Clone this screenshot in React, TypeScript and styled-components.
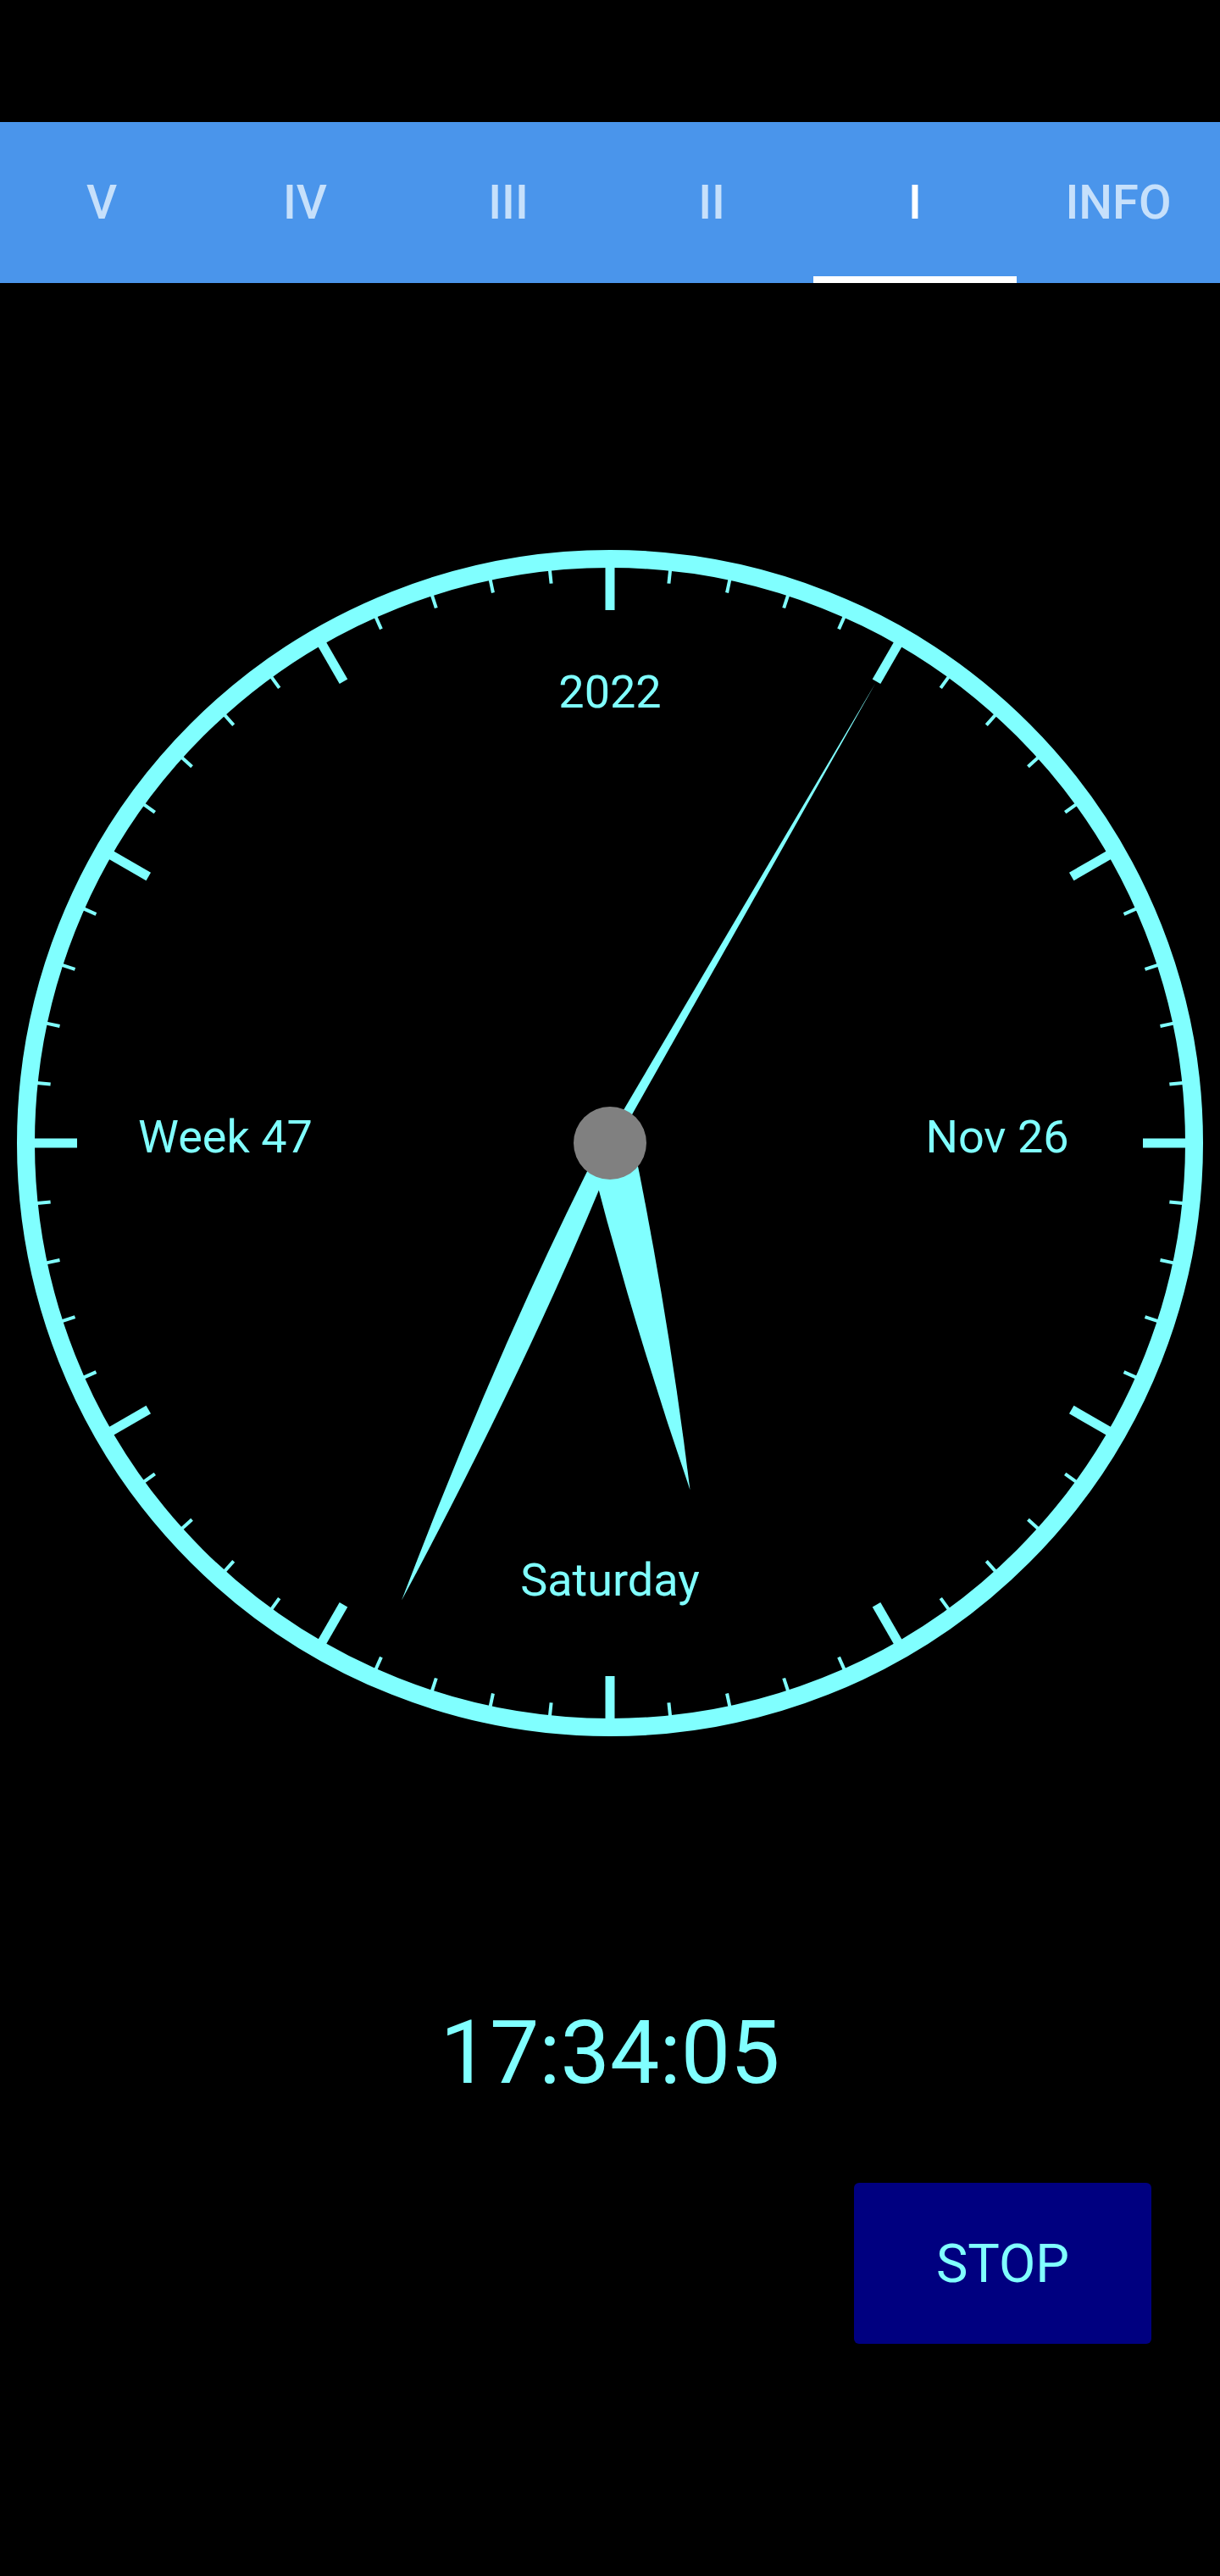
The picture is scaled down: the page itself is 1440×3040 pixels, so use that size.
import React, { useState } from "react";
import styled, { createGlobalStyle } from "styled-components";

const CYAN = "#80ffff";

const GlobalStyle = createGlobalStyle`
  html, body {
    margin: 0;
    padding: 0;
    background: #000;
  }
  body {
    font-family: Roboto, "Noto Sans", "Liberation Sans", sans-serif;
  }
`;

const Page = styled.div`
  width: 1440px;
  min-height: 3040px;
  background: #000;
  display: flex;
  flex-direction: column;
`;

const StatusBar = styled.div`
  height: 144px;
  background: #000;
`;

const TabBar = styled.nav`
  display: flex;
  height: 190px;
  background: #4a95eb;
`;

const Tab = styled.button<{ $active?: boolean }>`
  flex: 1;
  display: flex;
  flex-direction: column;
  padding: 0;
  border: none;
  background: transparent;
  cursor: pointer;
  font-family: Roboto, "Liberation Sans", sans-serif;
  font-weight: 500;
  font-size: 56px;
  color: ${(p) => (p.$active ? "#ffffff" : "#c6e0fb")};
`;

const TabLabel = styled.span`
  flex: 1;
  display: flex;
  align-items: center;
  justify-content: center;
  padding-top: 8px;
`;

const TabIndicator = styled.span<{ $active?: boolean }>`
  height: 8px;
  background: ${(p) => (p.$active ? "#ffffff" : "transparent")};
`;

const ClockWrap = styled.div`
  margin-top: 310px;
  display: flex;
  justify-content: center;
`;

const TimeText = styled.div`
  margin-top: 317px;
  text-align: center;
  font-size: 104px;
  line-height: 1;
  color: ${CYAN};
  font-family: Roboto, "Liberation Sans", sans-serif;
`;

const ButtonRow = styled.div`
  margin-top: 101px;
  display: flex;
  justify-content: flex-end;
  padding-right: 81px;
`;

const StopButton = styled.button`
  width: 351px;
  height: 190px;
  border: none;
  border-radius: 6px;
  background: #000080;
  color: ${CYAN};
  font-family: Roboto, "Liberation Sans", sans-serif;
  font-size: 63px;
  cursor: pointer;
`;

const tabs = ["V", "IV", "III", "II", "I", "INFO"];

const CX = 720;
const CY = 705;

// tapered hand: base half width at the center, a curve control point, tip
const handPath = (deg: number, base: number, ctrlR: number, ctrlW: number, len: number) => {
  const a = (deg * Math.PI) / 180;
  const ux = Math.sin(a);
  const uy = -Math.cos(a);
  const nx = Math.cos(a);
  const ny = Math.sin(a);
  const pt = (r: number, w: number) => `${CX + r * ux + w * nx},${CY + r * uy + w * ny}`;
  return `M ${pt(0, base)} Q ${pt(ctrlR, ctrlW)} ${pt(len, 0)} Q ${pt(ctrlR, -ctrlW)} ${pt(0, -base)} Z`;
};

const Clock: React.FC<{ h: number; m: number; s: number }> = ({ h, m, s }) => {
  const ticks = Array.from({ length: 60 }, (_, i) => {
    const major = i % 5 === 0;
    const a = (i * 6 * Math.PI) / 180;
    const r1 = 680;
    const r2 = major ? 629 : 664;
    return (
      <line
        key={i}
        x1={CX + r1 * Math.sin(a)}
        y1={CY - r1 * Math.cos(a)}
        x2={CX + r2 * Math.sin(a)}
        y2={CY - r2 * Math.cos(a)}
        stroke={CYAN}
        strokeWidth={major ? 11 : 4}
      />
    );
  });

  const hourDeg = ((h % 12) + m / 60) * 30;
  const minDeg = (m + s / 60) * 6;
  const secDeg = s * 6;

  return (
    <svg width="1440" height="1410" viewBox="0 0 1440 1410">
      <circle cx={CX} cy={CY} r={689.5} fill="none" stroke={CYAN} strokeWidth={21} />
      {ticks}
      <g fill={CYAN} fontFamily="Roboto, 'Liberation Sans', sans-serif" fontSize="54" textAnchor="middle">
        <text x={720} y={191}>2022</text>
        <text x={266} y={716}>Week 47</text>
        <text x={1177} y={716}>Nov 26</text>
        <text x={720} y={1239}>Saturday</text>
      </g>
      <path d={handPath(hourDeg, 27, 210, 22, 420)} fill={CYAN} />
      <path d={handPath(minDeg, 9, 265, 21, 593)} fill={CYAN} />
      <path d={handPath(secDeg, 6, 300, 3.5, 627)} fill={CYAN} />
      <circle cx={CX} cy={CY} r={43} fill="#808080" />
    </svg>
  );
};

const App: React.FC = () => {
  const [active, setActive] = useState(4);

  return (
    <Page>
      <GlobalStyle />
      <StatusBar />
      <TabBar>
        {tabs.map((t, i) => (
          <Tab key={t} $active={i === active} onClick={() => setActive(i)}>
            <TabLabel>{t}</TabLabel>
            <TabIndicator $active={i === active} />
          </Tab>
        ))}
      </TabBar>
      <ClockWrap>
        <Clock h={17} m={34} s={5} />
      </ClockWrap>
      <TimeText>17:34:05</TimeText>
      <ButtonRow>
        <StopButton>STOP</StopButton>
      </ButtonRow>
    </Page>
  );
};

export default App;
